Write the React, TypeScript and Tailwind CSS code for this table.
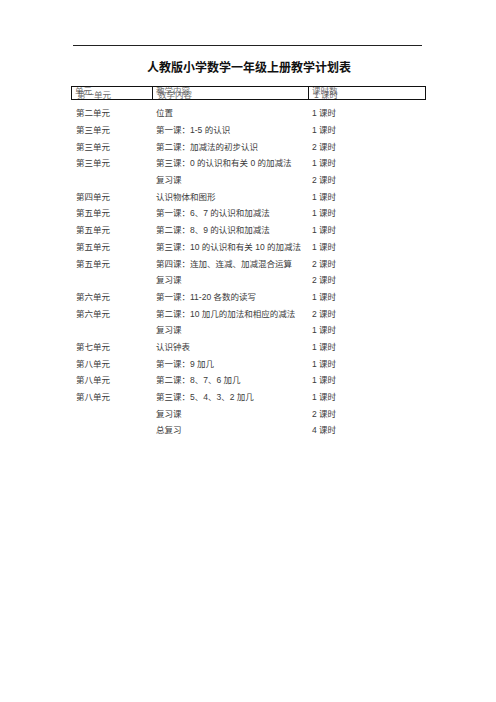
const rows: [string, string, string][] = [
  ["第二单元", "位置", "1 课时"],
  ["第三单元", "第一课：1-5 的认识", "1 课时"],
  ["第三单元", "第二课：加减法的初步认识", "2 课时"],
  ["第三单元", "第三课：0 的认识和有关 0 的加减法", "1 课时"],
  ["", "复习课", "2 课时"],
  ["第四单元", "认识物体和图形", "1 课时"],
  ["第五单元", "第一课：6、7 的认识和加减法", "1 课时"],
  ["第五单元", "第二课：8、9 的认识和加减法", "1 课时"],
  ["第五单元", "第三课：10 的认识和有关 10 的加减法", "1 课时"],
  ["第五单元", "第四课：连加、连减、加减混合运算", "2 课时"],
  ["", "复习课", "2 课时"],
  ["第六单元", "第一课：11-20 各数的读写", "1 课时"],
  ["第六单元", "第二课：10 加几的加法和相应的减法", "2 课时"],
  ["", "复习课", "1 课时"],
  ["第七单元", "认识钟表", "1 课时"],
  ["第八单元", "第一课：9 加几", "1 课时"],
  ["第八单元", "第二课：8、7、6 加几", "1 课时"],
  ["第八单元", "第三课：5、4、3、2 加几", "1 课时"],
  ["", "复习课", "2 课时"],
  ["", "总复习", "4 课时"],
];

const font = {
  fontFamily: '"Liberation Sans", "Noto Sans CJK SC", sans-serif',
};

// header cells in the source doc have two lines printed over each other
function HeadCell({ top, under, last }: { top: string; under: string; last?: boolean }) {
  return (
    <div className={`grid h-[12px] overflow-visible ${last ? "" : "border-r border-[#111]"}`}>
      <span className="col-start-1 row-start-1 pl-[3px] -mt-[2px] opacity-75">{top}</span>
      <span className="col-start-1 row-start-1 pl-[5px] mt-[2px] opacity-75">{under}</span>
    </div>
  );
}

export default function App() {
  return (
    <div
      className="w-[496px] h-[702px] bg-white text-[#3a3a3a] pt-[45px]"
      style={font}
    >
      <div className="ml-[73px] w-[349px] h-[1px] bg-[#222]" />
      <h1 className="mt-[14px] text-center text-[12px] font-bold text-[#111] leading-[16px] pl-[2px]">
        人教版小学数学一年级上册教学计划表
      </h1>
      <div className="ml-[71px] w-[355px] mt-[10px] grid grid-cols-[81px_156px_118px] h-[14px] border border-[#111] text-[8.5px] leading-[12px]">
        <HeadCell top="单元" under="第一单元" />
        <HeadCell top="教学内容" under="数学内容" />
        <HeadCell top="课时数" under="1 课时" last />
      </div>
      <div className="ml-[71px] w-[355px] mt-[5px] text-[8.5px]">
        {rows.map(([unit, content, hours], i) => (
          <div
            key={i}
            className="grid grid-cols-[81px_156px_118px] h-[16.7px] items-center leading-[12px]"
          >
            <span className="pl-[5px]">{unit}</span>
            <span className="pl-[4px] whitespace-nowrap">{content}</span>
            <span className="pl-[4px]">{hours}</span>
          </div>
        ))}
      </div>
    </div>
  );
}
